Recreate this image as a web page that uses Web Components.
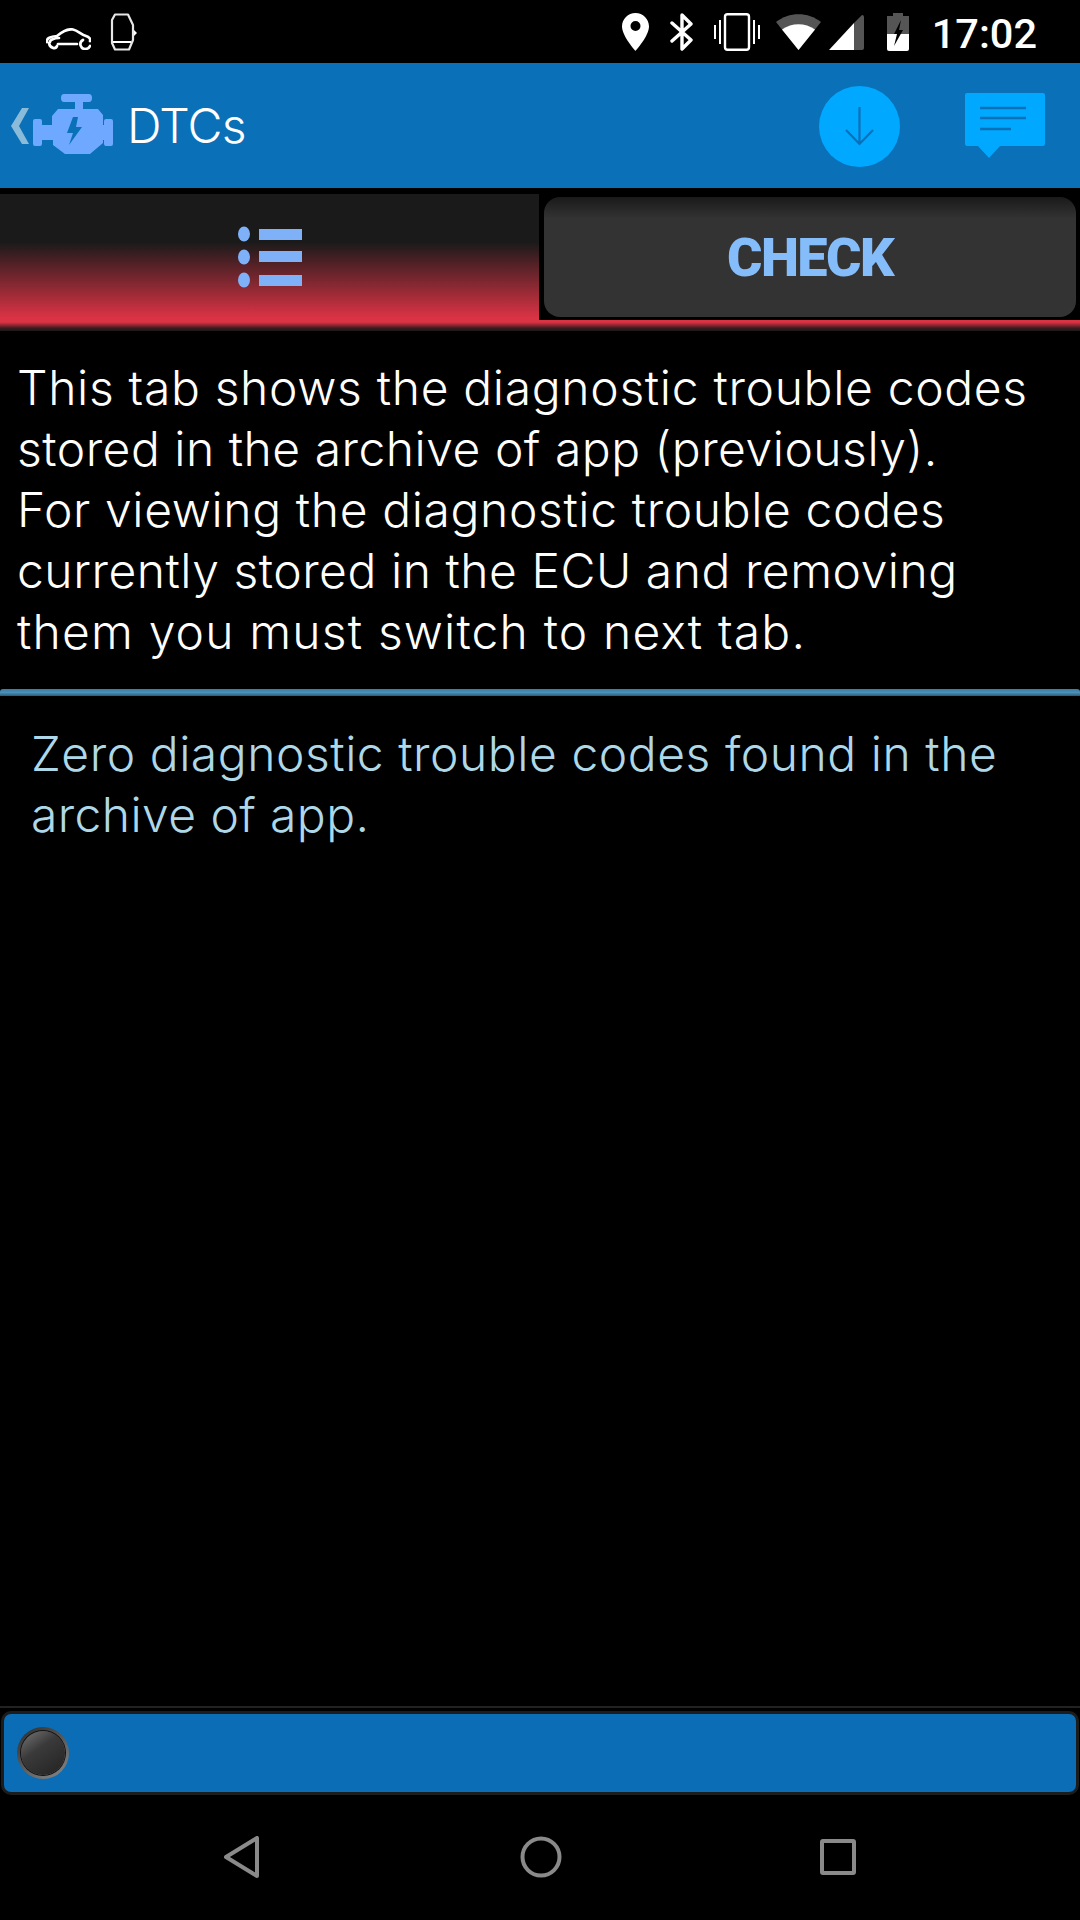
<!DOCTYPE html>
<html lang="en">
<head>
<meta charset="UTF-8">
<title>DTCs</title>
<style>
    html, body { margin: 0; background: #000; }
    body { width: 1080px; height: 1920px; display: flex; flex-direction: column; font-family: Inter, "Noto Sans", sans-serif; overflow: hidden; }
    dtc-spacer { flex: 1; display: block; }
</style>
</head>
<body>
<dtc-status-bar></dtc-status-bar>
<dtc-app-bar title="DTCs"></dtc-app-bar>
<dtc-tabs label="CHECK"></dtc-tabs>
<dtc-info>
    <div>This tab shows the diagnostic trouble codes</div>
    <div style="letter-spacing: .5px">stored in the archive of app (previously).</div>
    <div style="letter-spacing: .62px">For viewing the diagnostic trouble codes</div>
    <div style="letter-spacing: .52px">currently stored in the ECU and removing</div>
    <div style="letter-spacing: 1.17px">them you must switch to next tab.</div>
</dtc-info>
<dtc-message>
    <div style="letter-spacing: .53px">Zero diagnostic trouble codes found in the</div>
    <div style="letter-spacing: .4px">archive of app.</div>
</dtc-message>
<dtc-spacer></dtc-spacer>
<dtc-connection></dtc-connection>
<dtc-nav></dtc-nav>

<script>
    class DtcStatusBar extends HTMLElement {
        constructor() {
            super();
            this.attachShadow({mode: 'open'});
            this.shadowRoot.innerHTML = `
                <style>
                    :host { display: flex; height: 63px; align-items: center; background: #000; color: #fff; flex: none; }
                    svg { display: block; flex: none; }
                    .car { margin-left: 46px; margin-top: 15px; }
                    .watch { margin-left: 19px; margin-top: 0; filter: blur(.4px); }
                    .pin { margin-left: auto; }
                    .bt { margin-left: 21px; }
                    .vib { margin-left: 20px; }
                    .wifi { margin-left: 16px; }
                    .sig { margin-left: 8px; margin-top: 2px; }
                    .bat { margin-left: 23px; }
                    .time { margin-left: 23px; margin-right: 43px; margin-top: 3px; font: 500 41.5px Roboto, sans-serif; }
                </style>
                <svg class="car" width="45" height="22" viewBox="0 0 45 22" fill="none" stroke="#fff" stroke-width="2.700" stroke-linecap="round">
                    <path d="M1 14 C0 10 5 8.500 11 8 C17 3 22 .5 27 1.500 C32 2.500 35 6.500 40 8 C43 9 45 11 44 13"/>
                    <path d="M4 14 C4 12 8 10 13 10"/>
                    <path d="M12 16 H31"/>
                    <path d="M3 15 C4 21 10 21 11 18"/>
                    <path d="M37 12 C32 15 35 21 39 21 C41 21 43 20 44 18"/>
                </svg>
                <svg class="watch" width="28" height="38" viewBox="0 0 28 38" fill="none" stroke="#fff">
                    <path d="M5 1.500 H18 L23 12 V27 L19 36.500 H5 L2 30 V7 Z" stroke-width="2.200" stroke-linejoin="round" opacity=".9"/>
                    <path d="M3 29 H21" stroke-width="2"/>
                    <path d="M24 17 L27 20 L24 23 Z" fill="#fff" stroke="none"/>
                </svg>
                <svg class="pin" width="27" height="38" viewBox="0 0 27 38">
                    <path fill="#fff" fill-rule="evenodd" d="M13.500 0 C6 0 0 6 0 13.500 C0 23 13.500 38 13.500 38 C13.500 38 27 23 27 13.500 C27 6 21 0 13.500 0 Z M13.500 18 A5 5 0 1 1 13.500 8 A5 5 0 1 1 13.500 18 Z"/>
                </svg>
                <svg class="bt" width="24" height="38" viewBox="0 0 24 38" fill="none" stroke="#fff" stroke-width="3.400" stroke-linejoin="round" stroke-linecap="round">
                    <path d="M2 10 L21 27 L12 36 V2 L21 11 L2 28"/>
                </svg>
                <svg class="vib" width="46" height="38" viewBox="0 0 46 38" fill="none" stroke="#fff">
                    <rect x="11" y="1.200" width="24" height="35.600" rx="2.500" stroke-width="2.400"/>
                    <path d="M6 7 V31 M1 12 V26 M40 7 V31 M45 12 V26" stroke-width="2"/>
                </svg>
                <svg class="wifi" width="45" height="36" viewBox="0 0 45 36">
                    <path fill="#555" d="M0 8 C13 -2.500 32 -2.500 45 8 L22.500 36 Z"/>
                    <path fill="#fff" d="M6 15.500 C16 8.500 29 8.500 39 15.500 L22.500 36 Z"/>
                </svg>
                <svg class="sig" width="35" height="35" viewBox="0 0 35 35">
                    <path fill="#555" d="M25 8 L33 0 Q35 0 35 2 V33 Q35 35 33 35 H25 Z"/>
                    <path fill="#fff" d="M25 8 V35 H0 Z"/>
                </svg>
                <svg class="bat" width="22" height="38" viewBox="0 0 22 38">
                    <path fill="#555" d="M6 0 H16 V3 H22 V21 H0 V3 H6 Z"/>
                    <path fill="#fff" d="M0 21 H22 V36 Q22 38 20 38 H2 Q0 38 0 36 Z"/>
                    <path fill="#000" d="M14 7 L7 21 H10 L7 33 L16 17 H12 Z"/>
                </svg>
                <span class="time">17:02</span>`;
        }
    }

    class DtcAppBar extends HTMLElement {
        constructor() {
            super();
            this.attachShadow({mode: 'open'});
            this.shadowRoot.innerHTML = `
                <style>
                    :host { display: flex; height: 125px; align-items: center; background: #0a70b8; color: #fff; flex: none; margin-bottom: 6px; }
                    svg { display: block; flex: none; }
                    .back { margin-left: 11px; margin-top: 1px; }
                    .engine { margin-left: 4px; margin-top: -3px; filter: blur(.7px); }
                    .title { margin-left: 14px; font-size: 48px; font-weight: 300; line-height: 1; margin-top: 0; letter-spacing: -.7px; }
                    .down { margin-left: auto; margin-top: 1px; filter: blur(.4px); }
                    .msg { margin-left: 65px; margin-right: 35px; margin-top: 1px; filter: blur(.4px); }
                </style>
                <svg class="back" width="18" height="36" viewBox="0 0 18 36">
                    <path fill="#8abbd8" d="M11 0 H18 L8 18 L18 36 H11 L0 18 Z"/>
                </svg>
                <svg class="engine" width="80" height="61" viewBox="0 0 80 61">
                    <path fill="#6ea8ff" d="M31 0 H56 Q59 0 59 4 Q59 8 56 8 H50 V15 H65 L70 21 V31 H71 V27 Q71 25 73 25 H78 Q80 25 80 27 V50 Q80 52 78 52 H73 Q71 52 71 50 V46 H70 V49 L57 60 H32 L20 51 V46 H9 V50 Q9 52 7 52 H2 Q0 52 0 50 V27 Q0 25 2 25 H7 Q9 25 9 27 V31 H19 V22 L25 15 H42 V8 H31 Q28 8 28 4 Q28 0 31 0 Z"/>
                    <path fill="#0a70b8" d="M45 23 H40 L34 39 H40 L36 51 L49 33 H43 Z"/>
                </svg>
                <span class="title"><slot></slot></span>
                <svg class="down" width="81" height="81" viewBox="0 0 81 81" fill="none">
                    <circle cx="40.500" cy="40.500" r="40.500" fill="#00a8ff"/>
                    <path d="M40.500 21 V58 M27 44 L40.500 58 L54 44" stroke="#0a70b8" stroke-width="2.200"/>
                </svg>
                <svg class="msg" width="80" height="66" viewBox="0 0 80 66">
                    <path fill="#00a8ff" d="M2 0 H78 Q80 0 80 2 V51 Q80 53 78 53 H35 L24 65 L13 53 H2 Q0 53 0 51 V2 Q0 0 2 0 Z"/>
                    <path d="M15 15 H61 M15 25 H61 M15 36 H46" stroke="#0a70b8" stroke-width="2.400"/>
                </svg>`;
            this.shadowRoot.querySelector('slot').textContent = this.getAttribute('title');
        }
    }

    class DtcTabs extends HTMLElement {
        constructor() {
            super();
            this.attachShadow({mode: 'open'});
            this.shadowRoot.innerHTML = `
                <style>
                    :host { display: block; flex: none; }
                    .row { display: flex; height: 126px; }
                    .list { width: 539px; display: flex; align-items: center; justify-content: center; background: linear-gradient(#1a1a1a 0, #1a1a1a 38%, #d93344 98%); }
                    .list svg { filter: blur(.6px); }
                    .check { flex: 1; padding: 3px 4px 3px 5px; display: flex; }
                    .check div { flex: 1; border-radius: 16px; display: flex; align-items: center; justify-content: center; background: linear-gradient(#1a1a1a 0, #333 18%, #333 100%); font: 900 54px Roboto, sans-serif; color: #85bdfb; letter-spacing: -1.500px; }
                    .check span { display: block; filter: blur(.6px); }
                    .line { height: 11px; background: linear-gradient(#d93344 0, #d93344 20%, #3a1a1e 75%, #1a1a1a 100%); }
                </style>
                <div class="row">
                    <div class="list">
                        <svg width="64" height="62" viewBox="0 0 64 62" fill="#7fb1f8">
                            <ellipse cx="6" cy="8" rx="6" ry="7.500"/><rect x="21" y="3" width="43" height="11"/>
                            <ellipse cx="6" cy="31" rx="6" ry="7.500"/><rect x="21" y="25" width="43" height="11"/>
                            <ellipse cx="6" cy="54" rx="6" ry="7.500"/><rect x="21" y="49" width="43" height="11"/>
                        </svg>
                    </div>
                    <div class="check"><div><span>${this.getAttribute('label')}</span></div></div>
                </div>
                <div class="line"></div>`;
        }
    }

    class DtcInfo extends HTMLElement {
        constructor() {
            super();
            this.attachShadow({mode: 'open'});
            this.shadowRoot.innerHTML = `
                <style>
                    :host { display: block; flex: none; height: 358px; box-sizing: border-box; padding: 26px 0 0 17px; color: #fff; font-size: 48px; font-weight: 300; line-height: 61px; white-space: nowrap; letter-spacing: .67px; }
                </style>
                <slot></slot>`;
        }
    }

    class DtcMessage extends HTMLElement {
        constructor() {
            super();
            this.attachShadow({mode: 'open'});
            this.shadowRoot.innerHTML = `
                <style>
                    :host { display: block; flex: none; padding: 27px 0 0 31px; color: #aed8e8; font-size: 48px; font-weight: 300; line-height: 61px; white-space: nowrap; letter-spacing: .67px; }
                    .rule { height: 7px; margin: -27px 0 27px -31px; border-radius: 3px 3px 0 0; background: linear-gradient(#3b7da3, #4a90b8 50%, #2a5a78); }
                </style>
                <div class="rule"></div>
                <slot></slot>`;
        }
    }

    class DtcConnection extends HTMLElement {
        constructor() {
            super();
            this.attachShadow({mode: 'open'});
            this.shadowRoot.innerHTML = `
                <style>
                    :host { display: block; flex: none; border-top: 2px solid #222; padding-top: 3px; }
                    .bar { height: 78px; margin: 0 1px; border: 3px solid #1c1c1c; border-radius: 10px; background: #0a6db5; display: flex; align-items: center; padding-left: 13px; }
                    .led { width: 52px; height: 52px; box-sizing: border-box; padding: 4px; border-radius: 50%; background: linear-gradient(145deg, #2a2a2a, #8a8a8a); filter: blur(.4px); }
                    .led div { height: 100%; border-radius: 50%; box-shadow: 0 0 0 1px #111; background: linear-gradient(145deg, #777 0, #3a3a3a 40%, #222 100%); }
                </style>
                <div class="bar"><div class="led"><div></div></div></div>`;
        }
    }

    class DtcNav extends HTMLElement {
        constructor() {
            super();
            this.attachShadow({mode: 'open'});
            this.shadowRoot.innerHTML = `
                <style>
                    :host { display: grid; grid-template-columns: 241px 540px 1fr; flex: none; height: 125px; box-sizing: border-box; padding-bottom: 1px; align-items: center; }
                    svg { display: block; justify-self: center; }
                    svg.first { justify-self: start; margin-left: 224px; }
                    svg.mid { grid-column: 2; justify-self: start; margin-left: 279px; }
                    svg.last { grid-column: 3; justify-self: start; margin-left: 39px; }
                </style>
                <svg class="first" width="35" height="42" viewBox="0 0 35 42" fill="none" stroke="#8a8a8a" stroke-width="4" stroke-linejoin="round"><path d="M33 2 V40 L2 21 Z"/></svg>
                <svg class="mid" width="42" height="42" viewBox="0 0 42 42" fill="none" stroke="#8a8a8a" stroke-width="4"><circle cx="21" cy="21" r="18.500"/></svg>
                <svg class="last" width="36" height="36" viewBox="0 0 36 36" fill="none" stroke="#8a8a8a" stroke-width="4" stroke-linejoin="round"><rect x="2" y="2" width="32" height="32" rx="1"/></svg>`;
        }
    }

    customElements.define('dtc-status-bar', DtcStatusBar);
    customElements.define('dtc-app-bar', DtcAppBar);
    customElements.define('dtc-tabs', DtcTabs);
    customElements.define('dtc-info', DtcInfo);
    customElements.define('dtc-message', DtcMessage);
    customElements.define('dtc-connection', DtcConnection);
    customElements.define('dtc-nav', DtcNav);
</script>
</body>
</html>
